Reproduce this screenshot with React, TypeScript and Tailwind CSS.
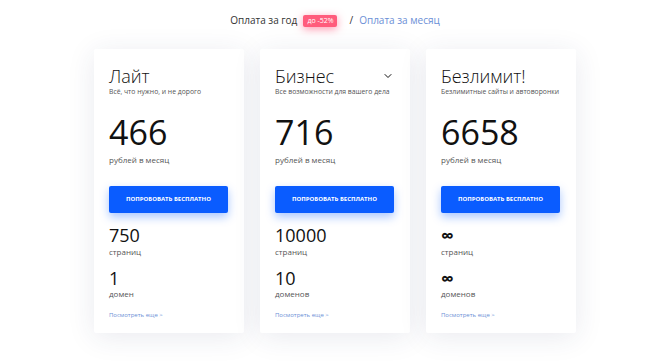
import { ChevronDown } from "lucide-react";

type Plan = {
    title: string,
    subtitle: string,
    price: string,
    pages: string,
    pagesLabel: string,
    domains: string,
    domainsLabel: string,
    menu?: boolean
}

const plans: Plan[] = [
    { title: "Лайт", subtitle: "Всё, что нужно, и не дорого", price: "466", pages: "750", pagesLabel: "страниц", domains: "1", domainsLabel: "домен" },
    { title: "Бизнес", subtitle: "Все возможности для вашего дела", price: "716", pages: "10000", pagesLabel: "страниц", domains: "10", domainsLabel: "доменов", menu: true },
    { title: "Безлимит!", subtitle: "Безлимитные сайты и автоворонки", price: "6658", pages: "∞", pagesLabel: "страниц", domains: "∞", domainsLabel: "доменов" },
]

const PlanCard = ({ plan }: { plan: Plan }) => {
    const inf = plan.pages === "∞";
    return (
        <div className="w-[150px] h-[284px] bg-white rounded-[2px] shadow-[0_4px_28px_rgba(40,50,100,0.10)] px-[15px] pt-[18px]">
            <div className="flex items-center justify-between">
                <h2 className="text-[18px] leading-[18px] font-light text-[#111]">{plan.title}</h2>
                {plan.menu && <ChevronDown size={12} strokeWidth={2} className="text-[#111] mr-[1px]" />}
            </div>
            <p className="mt-[2px] text-[6.8px] leading-[10px] whitespace-nowrap text-[#555]">{plan.subtitle}</p>
            <div className="mt-[18px] text-[34px] leading-[34px] text-[#111]">{plan.price}</div>
            <p className="mt-[6px] text-[8px] leading-[10px] text-[#555]">рублей в месяц</p>
            <button className="mt-[21px] w-[119px] h-[27px] rounded-[2px] bg-[#0a5cff] text-white text-[6px] font-bold uppercase shadow-[0_4px_10px_rgba(10,92,255,0.35)]">
                Попробовать бесплатно
            </button>
            <div className={inf ? "mt-[13px] h-[18px] text-[18px] leading-[18px] font-bold text-[#111]" : "mt-[13px] h-[18px] text-[18px] leading-[18px] text-[#111]"}>{plan.pages}</div>
            <p className="mt-[3px] text-[8px] leading-[10px] text-[#555]">{plan.pagesLabel}</p>
            <div className={inf ? "mt-[12px] h-[18px] text-[18px] leading-[18px] font-bold text-[#111]" : "mt-[12px] h-[18px] text-[18px] leading-[18px] text-[#111]"}>{plan.domains}</div>
            <p className="mt-[2px] text-[8px] leading-[10px] text-[#555]">{plan.domainsLabel}</p>
            <p className="mt-[12px] text-[6px] leading-[8px] text-[#6b8fd6]">Посмотреть еще &gt;</p>
        </div>
    );
};

const App = () => {
    return (
        <div className="w-[670px] h-[363px] bg-white font-['Open_Sans',sans-serif] flex flex-col items-center overflow-hidden">
            <div className="h-[49px] flex items-center gap-[6px] pb-[8px] text-[10px]">
                <span className="text-[#333]">Оплата за год</span>
                <span className="bg-[#ff5c7c] text-white text-[7px] leading-[12px] px-[4px] rounded-[2px] shadow-[0_2px_8px_rgba(255,80,120,0.6)]">до -52%</span>
                <span className="text-[#333] ml-[6px]">/</span>
                <span className="text-[#6b8fd6]">Оплата за месяц</span>
            </div>
            <div className="flex gap-[16px]">
                {plans.map((p) => <PlanCard key={p.title} plan={p} />)}
            </div>
        </div>
    );
};

export default App;
